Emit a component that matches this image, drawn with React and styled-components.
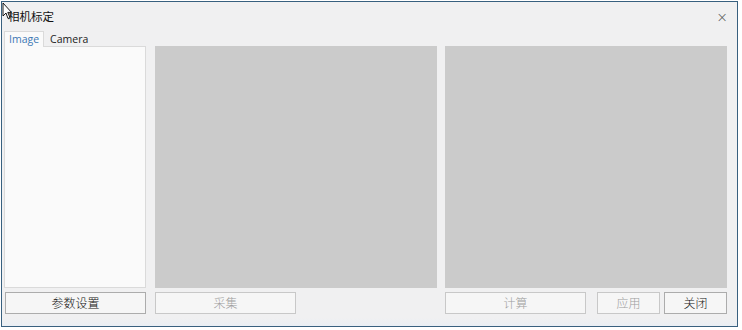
import { createGlobalStyle, styled } from 'styled-components';

const GlobalStyle = createGlobalStyle`
  html, body {
    margin: 0;
    padding: 0;
    background: #ffffff;
  }
  body {
    font-family: "Noto Sans", "Noto Sans CJK SC", sans-serif;
  }
`;

const Page = styled.div`
  width: 742px;
  height: 330px;
  padding: 1px 0 0 1px;
  box-sizing: border-box;
`;

const Window = styled.div`
  position: relative;
  width: 737px;
  height: 326px;
  box-sizing: border-box;
  border: 1px solid #38607f;
  background: #f0f0f1;
  display: flex;
  flex-direction: column;
`;

const TitleBar = styled.div`
  height: 28px;
  display: flex;
  align-items: center;
  justify-content: space-between;
  padding: 0 9px 0 6px;
  font-size: 11.5px;
  font-weight: 400;
  color: #111;
  font-family: "Noto Sans CJK SC", sans-serif;
`;

const Close = styled.span`
  font-family: "DejaVu Sans", sans-serif;
  font-size: 14px;
  font-weight: 300;
  color: #555;
  margin-top: 1px;
`;

const Cursor = styled.svg`
  position: absolute;
  left: 0;
  top: 0;
`;

const Body = styled.div`
  display: grid;
  grid-template-columns: 142px 283px 282px;
  grid-template-rows: 16px 242px 26px;
  column-gap: 8px;
  padding-left: 2px;
`;

const TabStrip = styled.div`
  display: flex;
  align-items: flex-end;
  grid-column: 1;
  grid-row: 1;
`;

const Tab = styled.div`
  height: ${(p) => (p.$active ? '16px' : '15px')};
  padding: 0 ${(p) => (p.$active ? '4px' : '5px')};
  box-sizing: border-box;
  font-family: "Open Sans", "Liberation Sans", sans-serif;
  font-size: 10.5px;
  line-height: 15px;
  color: ${(p) => (p.$active ? '#3c78b4' : '#222')};
  background: ${(p) => (p.$active ? '#fafafa' : 'transparent')};
  border: 1px solid ${(p) => (p.$active ? '#dadada' : 'transparent')};
  border-bottom: none;
  margin-bottom: ${(p) => (p.$active ? '-1px' : '0')};
  position: relative;
  z-index: 1;
`;

const TabPanel = styled.div`
  grid-column: 1;
  grid-row: 2;
  background: #fafafa;
  border: 1px solid #dadada;
`;

const View = styled.div`
  grid-column: ${(p) => p.$col};
  grid-row: 2;
  background: #cbcbcb;
  margin-left: ${(p) => (p.$col === 2 ? '1px' : '0')};
`;

const ButtonRow = styled.div`
  grid-column: ${(p) => p.$col};
  grid-row: 3;
  display: flex;
  align-items: flex-start;
  padding-top: 4px;
  margin-left: ${(p) => (p.$col === 3 ? '0' : '1px')};
`;

const Button = styled.button`
  width: ${(p) => p.$w}px;
  height: 22px;
  margin-left: ${(p) => p.$ml || 0}px;
  padding: 0;
  box-sizing: border-box;
  background: #f6f6f6;
  border: 1px solid ${(p) => (p.disabled ? '#c8c8c8' : '#acacac')};
  color: ${(p) => (p.disabled ? '#a0a0a0' : '#111')};
  font-family: "Noto Sans CJK SC", sans-serif;
  font-size: 12px;
  font-weight: 300;
  line-height: 20px;
`;

const Footer = styled.div`
  flex: 1;
  margin-top: 4px;
  background: linear-gradient(#f0f0f1 0, #e9eef4 100%);
`;

export default function App() {
  return (
    <Page>
      <GlobalStyle />
      <Window>
        <TitleBar>
          <span>相机标定</span>
          <Close>×</Close>
        </TitleBar>
        <Body>
          <TabStrip>
            <Tab $active>Image</Tab>
            <Tab>Camera</Tab>
          </TabStrip>
          <TabPanel />
          <View $col={2} />
          <View $col={3} />
          <ButtonRow $col={1}>
            <Button $w={141}>参数设置</Button>
          </ButtonRow>
          <ButtonRow $col={2}>
            <Button $w={141} disabled>采集</Button>
          </ButtonRow>
          <ButtonRow $col={3}>
            <Button $w={141} disabled>计算</Button>
            <Button $w={63} $ml={11} disabled>应用</Button>
            <Button $w={63} $ml={4}>关闭</Button>
          </ButtonRow>
        </Body>
        <Footer />
        <Cursor width="10" height="20" viewBox="0 0 10 20">
          <path d="M1 1 L1 14 L4 11 L6 16.5 L8 15.6 L5.8 10.4 L9.5 10.4 Z" fill="#fff" stroke="#000" strokeWidth="0.9" />
        </Cursor>
      </Window>
    </Page>
  );
}
